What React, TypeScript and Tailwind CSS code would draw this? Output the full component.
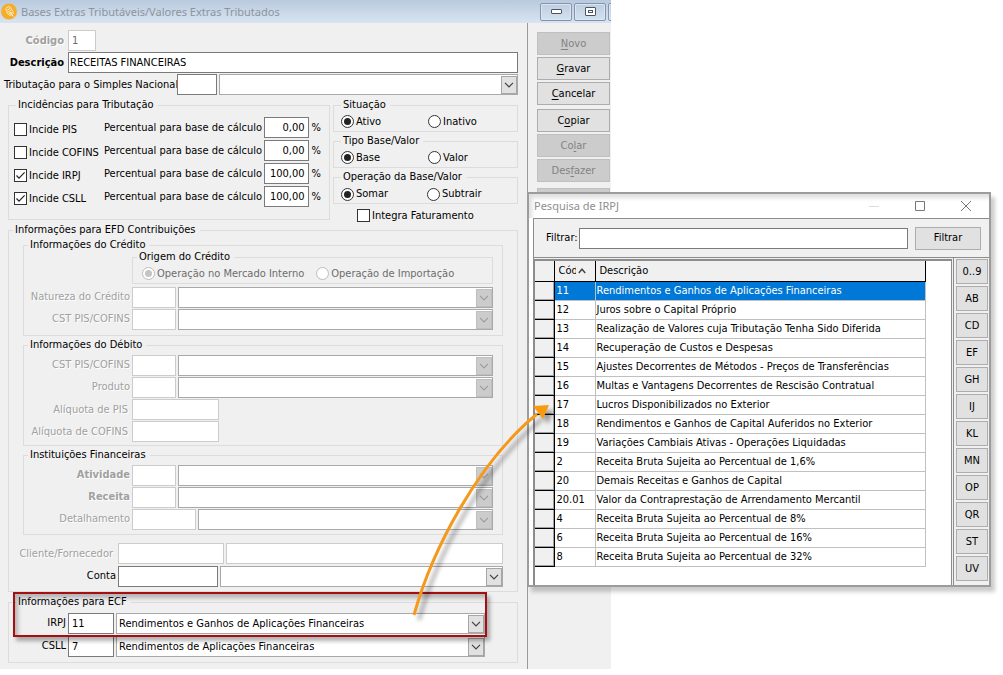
import type { ReactNode } from "react";

const inputBase = "h-[21px] border bg-white px-[3px] text-[11px] leading-[14px] outline-none ";
const inputOn = inputBase + "border-[#7a7a7a] text-black";
const inputOff = inputBase + "border-[#cccccc] text-[#6d6d6d]";

function Box({ id, label, value = "", off = false, className = "" }: { id?: string; label?: string; value?: string; off?: boolean; className?: string }) {
  return <input id={id} aria-label={label} type="text" defaultValue={value} disabled={off} className={(off ? inputOff : inputOn) + " " + className} />;
}

function Chevron({ color }: { color: string }) {
  return (
    <svg width="10" height="6" viewBox="0 0 10 6" fill="none" stroke={color} strokeWidth="1.2">
      <path d="M1 0.8 L5 4.8 L9 0.8" />
    </svg>
  );
}

function Combo({ label, value = "", off = false, className = "" }: { label: string; value?: string; off?: boolean; className?: string }) {
  return (
    <div className={"relative h-[21px] min-w-0 flex-1 " + className}>
      <select aria-label={label} disabled={off} className="h-full w-full appearance-none border border-[#a9a9a9] bg-white pr-5 pl-0.5 text-[11px] leading-[14px] text-black opacity-100 outline-none">
        <option>{value}</option>
      </select>
      <span
        className={
          "pointer-events-none absolute top-0.5 right-px bottom-px flex w-4 items-center justify-center border " +
          (off ? "border-[#bfbfbf] bg-[#cccccc]" : "border-[#a6a6a6] bg-[#e1e1e1]")
        }
      >
        <Chevron color={off ? "#9d9d9d" : "#404040"} />
      </span>
    </div>
  );
}

function Group({ title, legendClass = "ml-[7px]", className = "", children }: { title: string; legendClass?: string; className?: string; children: ReactNode }) {
  return (
    <fieldset className={"min-w-0 border border-[#dcdcdc] " + className}>
      <legend className={"h-[14px] pr-1 pl-0.5 leading-[14px] text-black " + legendClass}>{title}</legend>
      {children}
    </fieldset>
  );
}

function Check({ label, checked = false, className = "" }: { label: string; checked?: boolean; className?: string }) {
  return (
    <label className={"flex items-center gap-0.5 " + className}>
      <span className="relative flex size-[13px] shrink-0">
        <input type="checkbox" defaultChecked={checked} className="peer size-[13px] appearance-none border border-[#333333] bg-white" />
        <svg className="pointer-events-none absolute inset-0 hidden peer-checked:block" width="13" height="13" viewBox="0 0 13 13" fill="none" stroke="#222" strokeWidth="1.2">
          <path d="M2.5 6.5 L5 9.2 L10.6 3.4" />
        </svg>
      </span>
      <span className="whitespace-nowrap">{label}</span>
    </label>
  );
}

function Radio({ name, label, checked = false, off = false, className = "" }: { name: string; label: string; checked?: boolean; off?: boolean; className?: string }) {
  return (
    <label className={"flex items-center gap-0.5 " + (off ? "text-[#6d6d6d] " : "") + className}>
      <span className="relative flex size-[13px] shrink-0">
        <input
          type="radio"
          name={name}
          defaultChecked={checked}
          disabled={off}
          className="peer size-[13px] appearance-none rounded-full border border-[#333333] bg-white disabled:border-[#bcbcbc]"
        />
        <span className="pointer-events-none absolute inset-[3px] hidden rounded-full bg-[#222222] peer-checked:block peer-disabled:bg-[#c4c4c4]" />
      </span>
      <span className="whitespace-nowrap">{label}</span>
    </label>
  );
}

const taxes = [
  { id: "pis", label: "Incide PIS", value: "0,00", checked: false },
  { id: "cofins", label: "Incide COFINS", value: "0,00", checked: false },
  { id: "irpj", label: "Incide IRPJ", value: "100,00", checked: true },
  { id: "csll", label: "Incide CSLL", value: "100,00", checked: true },
];

function FieldRow({ id, label, bold = false, inputClass = "w-[44px]", combo = true }: { id: string; label: string; bold?: boolean; inputClass?: string; combo?: boolean }) {
  return (
    <div className="flex gap-0.5">
      <label
        htmlFor={id}
        className={
          "w-[106px] shrink-0 text-right whitespace-nowrap text-[#a0a0a0] [text-shadow:1px_1px_0_#ffffff] " +
          (bold ? "font-bold " : "") +
          (combo ? "pt-[3px]" : "pt-1 pr-0.5")
        }
      >
        {label}
      </label>
      <Box id={id} off className={"shrink-0 " + inputClass} />
      {combo && <Combo label={label} off />}
    </div>
  );
}

function SideButton({ before = "", hot = "", after = "", label, off = false, className = "" }: { before?: string; hot?: string; after?: string; label?: string; off?: boolean; className?: string }) {
  return (
    <button
      type="button"
      aria-label={label}
      disabled={off}
      className={
        "h-[23px] w-full border border-[#adadad] bg-[#e1e1e1] text-center text-black disabled:border-[#bfbfbf] disabled:bg-[#cccccc] disabled:text-[#838383] " + className
      }
    >
      {before}
      <span className="underline underline-offset-2">{hot}</span>
      {after}
    </button>
  );
}

const captionButton = "flex h-[18px] w-8 shrink-0 items-center justify-center rounded-[2px] border border-[#8494ad] shadow-[inset_0_0_0_1px_#dbe6f2]";

function MainWindow() {
  return (
    <section className="mr-[392px] min-w-0 bg-[#f0f0f0]">
      <header className="flex h-[23px] items-center overflow-hidden bg-linear-to-b from-[#b9cade] to-[#d8e4f1]">
        <svg className="ml-px shrink-0" width="17" height="17" viewBox="0 0 17 17">
          <circle cx="8" cy="8.5" r="8" fill="#f5ae2b" />
          <g fill="none" stroke="#ffe9bd" strokeWidth="1">
            <path d="M4.5 5.8 L7.2 3.6 L9.2 4.2 L12 8.6 Q12.6 11 10.6 12.2 Q8 12.8 6.8 10.8 Z" />
            <path d="M6 7.4 L9 5.4 M7 9.2 L10 7.2 M8.7 9.6 h1.8 v1.4 h-1.8 z M11 12 L12.6 13.6" />
          </g>
        </svg>
        <h1 className="ml-[3px] flex-1 truncate font-['Noto_Sans',sans-serif] text-[11px] leading-4 text-[#8b949e]">Bases Extras Tributáveis/Valores Extras Tributados</h1>
        <div className="flex w-[71px] shrink-0 gap-0.5 overflow-hidden">
          <button type="button" aria-label="Minimizar" className={captionButton}>
            <span className="h-[5px] w-[11px] rounded-[1px] border border-[#4c5565] bg-white" />
          </button>
          <button type="button" aria-label="Maximizar" className={captionButton}>
            <span className="flex h-[9px] w-[11px] items-center justify-center rounded-[1px] border border-[#4c5565] bg-white">
              <span className="h-[3px] w-[5px] border border-[#4c5565]" />
            </span>
          </button>
          <button type="button" aria-label="Fechar" className={captionButton} />
        </div>
      </header>

      <div className="flex">
        <form className="min-w-0 flex-1 pt-[7px] pr-[9px] pb-1.5 pl-2">
          <div className="flex flex-col gap-px">
            <div className="flex items-center gap-1">
              <label htmlFor="codigo" className="w-14 shrink-0 text-right font-bold text-[#a0a0a0] [text-shadow:1px_1px_0_#ffffff]">
                Código
              </label>
              <Box id="codigo" value="1" off className="w-7" />
            </div>
            <div className="flex items-center gap-1">
              <label htmlFor="descricao" className="w-14 shrink-0 text-right font-bold whitespace-nowrap">
                Descrição
              </label>
              <Box id="descricao" value="RECEITAS FINANCEIRAS" className="min-w-0 flex-1 pl-px" />
            </div>
            <div className="-ml-1 flex items-center gap-0.5">
              <label htmlFor="simples" className="w-[171px] shrink-0 text-right whitespace-nowrap">
                Tributação para o Simples Nacional
              </label>
              <Box id="simples" className="w-10 shrink-0" />
              <Combo label="Tributação para o Simples Nacional" />
            </div>
          </div>

          <div className="mt-[3px] flex items-start gap-[3px]">
            <Group title="Incidências para Tributação" className="w-[322px] shrink-0 pb-3">
              <div className="flex flex-col gap-0.5 pt-[5px] pr-2 pl-[5px]">
                {taxes.map((t) => (
                  <div key={t.id} className="flex items-center">
                    <Check label={t.label} checked={t.checked} className="w-[90px] shrink-0 pt-1" />
                    <label htmlFor={t.id} className="w-[160px] whitespace-nowrap">
                      Percentual para base de cálculo
                    </label>
                    <Box id={t.id} value={t.value} className="w-[45px] text-right" />
                    <span className="ml-[3px]">%</span>
                  </div>
                ))}
              </div>
            </Group>
            <div className="flex min-w-0 flex-1 flex-col gap-0.5">
              <Group title="Situação">
                <div className="flex h-[19px] items-center pl-[7px]">
                  <Radio name="situacao" label="Ativo" checked className="w-[87px]" />
                  <Radio name="situacao" label="Inativo" />
                </div>
              </Group>
              <Group title="Tipo Base/Valor">
                <div className="flex h-[19px] items-center pl-[7px]">
                  <Radio name="tipo" label="Base" checked className="w-[87px]" />
                  <Radio name="tipo" label="Valor" />
                </div>
              </Group>
              <Group title="Operação da Base/Valor">
                <div className="flex h-[19px] items-center pt-px pl-[7px]">
                  <Radio name="operacao" label="Somar" checked className="w-[86px]" />
                  <Radio name="operacao" label="Subtrair" />
                </div>
              </Group>
              <div className="flex h-4 items-end pl-6">
                <Check label="Integra Faturamento" className="h-[13px]" />
              </div>
            </div>
          </div>

          <Group title="Informações para EFD Contribuições" legendClass="-ml-[10px]" className="mt-px px-[14px] pt-px pb-1">
            <Group title="Informações do Crédito" legendClass="ml-1" className="pr-[9px] pb-[5px]">
              <Group title="Origem do Crédito" legendClass="ml-1" className="-mt-0.5 ml-[108px]">
                <div className="flex h-[19px] items-center gap-3 pl-[9px]">
                  <Radio name="origem" label="Operação no Mercado Interno" checked off />
                  <Radio name="origem" label="Operação de Importação" off />
                </div>
              </Group>
              <div className="mt-[3px] flex flex-col gap-px">
                <FieldRow id="natureza" label="Natureza do Crédito" />
                <FieldRow id="cst-credito" label="CST PIS/COFINS" />
              </div>
            </Group>
            <Group title="Informações do Débito" legendClass="ml-1" className="mt-0.5 pr-[9px] pb-[3px]">
              <div className="flex flex-col gap-px pt-[3px]">
                <FieldRow id="cst-debito" label="CST PIS/COFINS" />
                <FieldRow id="produto" label="Produto" />
                <FieldRow id="aliquota-pis" label="Alíquota de PIS" inputClass="w-[87px]" combo={false} />
                <FieldRow id="aliquota-cofins" label="Alíquota de COFINS" inputClass="w-[87px]" combo={false} />
              </div>
            </Group>
            <Group title="Instituições Financeiras" legendClass="ml-1" className="mt-0.5 pr-[9px] pb-1">
              <div className="flex flex-col gap-px pt-[3px]">
                <FieldRow id="atividade" label="Atividade" bold />
                <FieldRow id="receita" label="Receita" bold />
                <FieldRow id="detalhamento" label="Detalhamento" inputClass="w-[64px]" />
              </div>
            </Group>
            <div className="mt-2 flex flex-col gap-0.5">
              <div className="flex items-center gap-0.5">
                <label htmlFor="cliente" className="-ml-1 w-[97px] shrink-0 pr-[3px] text-right whitespace-nowrap text-[#a0a0a0] [text-shadow:1px_1px_0_#ffffff]">
                  Cliente/Fornecedor
                </label>
                <Box id="cliente" off className="w-[106px] shrink-0" />
                <Box label="Nome do cliente ou fornecedor" off className="min-w-0 flex-1" />
              </div>
              <div className="flex gap-0.5">
                <label htmlFor="conta" className="w-[93px] shrink-0 pt-[3px] text-right">
                  Conta
                </label>
                <Box id="conta" className="w-[100px] shrink-0" />
                <Combo label="Conta" />
              </div>
            </div>
          </Group>

          <div className="relative mt-[3px]">
            <Group title="Informações para ECF" className="pt-1 pb-[5px]">
              <div className="flex flex-col gap-0.5 pr-8">
                <div className="flex gap-0.5">
                  <label htmlFor="ecf-irpj" className="w-[57px] shrink-0 pt-[3px] text-right">
                    IRPJ
                  </label>
                  <Box id="ecf-irpj" value="11" className="w-[46px] shrink-0" />
                  <Combo label="IRPJ" value="Rendimentos e Ganhos de Aplicações Financeiras" />
                </div>
                <div className="flex gap-0.5">
                  <label htmlFor="ecf-csll" className="w-[57px] shrink-0 pt-[3px] text-right">
                    CSLL
                  </label>
                  <Box id="ecf-csll" value="7" className="w-[46px] shrink-0" />
                  <Combo label="CSLL" value="Rendimentos de Aplicações Financeiras" />
                </div>
              </div>
            </Group>
            <div className="pointer-events-none absolute -top-[3px] right-[31px] left-[5px] h-[45px] border-2 border-[#a50f12] shadow-[3px_4px_4px_rgba(0,0,0,0.3),inset_3px_4px_4px_rgba(0,0,0,0.25)]" />
          </div>
        </form>

        <aside className="w-[84px] shrink-0 border-l border-[#9a9a9a] pt-[9px] pr-px pl-[9px]">
          <div className="flex flex-col gap-0.5">
            <SideButton hot="N" after="ovo" off />
            <SideButton hot="G" after="ravar" />
            <SideButton hot="C" after="ancelar" />
            <SideButton before="C" hot="o" after="piar" className="mt-0.5" />
            <SideButton before="Co" hot="l" after="ar" off />
            <SideButton before="Des" hot="f" after="azer" off />
            <SideButton label="Excluir" off className="mt-1" />
          </div>
        </aside>
      </div>
    </section>
  );
}

const results: [string, string][] = [
  ["11", "Rendimentos e Ganhos de Aplicações Financeiras"],
  ["12", "Juros sobre o Capital Próprio"],
  ["13", "Realização de Valores cuja Tributação Tenha Sido Diferida"],
  ["14", "Recuperação de Custos e Despesas"],
  ["15", "Ajustes Decorrentes de Métodos - Preços de Transferências"],
  ["16", "Multas e Vantagens Decorrentes de Rescisão Contratual"],
  ["17", "Lucros Disponibilizados no Exterior"],
  ["18", "Rendimentos e Ganhos de Capital Auferidos no Exterior"],
  ["19", "Variações Cambiais Ativas - Operações Liquidadas"],
  ["2", "Receita Bruta Sujeita ao Percentual de 1,6%"],
  ["20", "Demais Receitas e Ganhos de Capital"],
  ["20.01", "Valor da Contraprestação de Arrendamento Mercantil"],
  ["4", "Receita Bruta Sujeita ao Percentual de 8%"],
  ["6", "Receita Bruta Sujeita ao Percentual de 16%"],
  ["8", "Receita Bruta Sujeita ao Percentual de 32%"],
];

const letters = ["0..9", "AB", "CD", "EF", "GH", "IJ", "KL", "MN", "OP", "QR", "ST", "UV"];

function SearchDialog() {
  return (
    <section
      role="dialog"
      aria-label="Pesquisa de IRPJ"
      className="absolute top-48 right-3 w-[464px] border-2 border-[#9c9c9c] bg-white shadow-[4px_5px_4px_rgba(0,0,0,0.2)]"
    >
      <header className="flex h-6 items-center pr-[18px] pl-[5px] text-[#8f8f8f] shadow-[inset_3px_4px_4px_rgba(0,0,0,0.13)]">
        <h2 className="flex-1 font-['Noto_Sans',sans-serif] text-[11px] leading-4">Pesquisa de IRPJ</h2>
        <div className="flex items-center gap-9">
          <button type="button" aria-label="Minimizar" disabled>
            <svg width="10" height="10" viewBox="0 0 10 10" stroke="#dcdcdc">
              <path d="M0 5.5 H10" />
            </svg>
          </button>
          <button type="button" aria-label="Maximizar">
            <svg width="10" height="10" viewBox="0 0 10 10" fill="none" stroke="#777">
              <path d="M0.5 0.5 H9.5 V9.5 H0.5 Z" />
            </svg>
          </button>
          <button type="button" aria-label="Fechar">
            <svg width="10" height="10" viewBox="0 0 10 10" fill="none" stroke="#777">
              <path d="M0 0 L10 10 M10 0 L0 10" />
            </svg>
          </button>
        </div>
      </header>
      <div className="ml-1 border-t border-l border-[#8c8c8c] bg-[#f0f0f0]">
        <div className="flex h-[38px] items-center pr-2 pl-3">
          <label htmlFor="filtro" className="mr-px whitespace-nowrap">
            Filtrar:
          </label>
          <Box id="filtro" className="min-w-0 flex-1" />
          <button type="button" className="ml-[7px] h-[23px] w-[66px] border border-[#adadad] bg-[#e1e1e1]">
            Filtrar
          </button>
        </div>
        <div className="flex border-t border-[#8c8c8c]">
          <div className="mt-px min-w-0 flex-1 border-t-2 border-r border-l border-[#8c8c8c] bg-white pr-[25px] pb-[18px]">
            <table className="w-full table-fixed border-collapse">
              <colgroup>
                <col className="w-[19px]" />
                <col className="w-[41px]" />
                <col />
              </colgroup>
              <thead>
                <tr className="h-5 bg-[#f0f0f0] text-left">
                  <th aria-label="Seleção" className="border-r border-b border-black p-0" />
                  <th className="border-r border-b border-black p-0 pl-1 font-normal">
                    <span className="flex items-center gap-0.5">
                      <span className="w-[17px] overflow-hidden">Cód</span>
                      <svg width="8" height="6" viewBox="0 0 8 6" fill="none" stroke="#444" strokeWidth="1.4">
                        <path d="M0.8 5 L4 1.2 L7.2 5" />
                      </svg>
                    </span>
                  </th>
                  <th className="border-r border-b border-black p-0 pl-1 font-normal">Descrição</th>
                </tr>
              </thead>
              <tbody>
                {results.map(([code, text], i) => (
                  <tr key={code} className={"h-[19px] " + (i === 0 ? "bg-[#0078d7] text-white" : "text-black")}>
                    <td className="border-r border-b border-black bg-[#f0f0f0] p-0 shadow-[inset_-1px_-1px_0_#a0a0a0]" />
                    <td className="border-r border-b border-[#c0c0c0] p-0 pl-0.5">{code}</td>
                    <td className="overflow-hidden border-r border-b border-[#c0c0c0] p-0 pl-px whitespace-nowrap">{text}</td>
                  </tr>
                ))}
              </tbody>
            </table>
          </div>
          <nav aria-label="Índice" className="ml-px flex w-[36px] shrink-0 flex-col gap-0.5 border-l border-[#8c8c8c] pt-px pr-px pl-0.5">
            {letters.map((l) => (
              <button key={l} type="button" className="h-[25px] border border-[#adadad] bg-[#e1e1e1]">
                {l}
              </button>
            ))}
          </nav>
        </div>
      </div>
    </section>
  );
}

export default function App() {
  return (
    <main className="relative min-h-screen bg-white font-['DejaVu_Sans_Condensed','DejaVu_Sans',sans-serif] text-[11px] leading-[14px] text-black">
      <MainWindow />
      <SearchDialog />
      <svg className="pointer-events-none absolute top-[390px] right-[443px] drop-shadow-[5px_5px_2px_rgba(0,0,0,0.35)]" width="160" height="240" viewBox="400 390 160 240" fill="none">
        <path d="M414 615 C432 550 478 462 537 414" stroke="#f39a1e" strokeWidth="3" />
        <path d="M549 405 L533 406 L543 419 Z" fill="#f99b0c" />
      </svg>
    </main>
  );
}
